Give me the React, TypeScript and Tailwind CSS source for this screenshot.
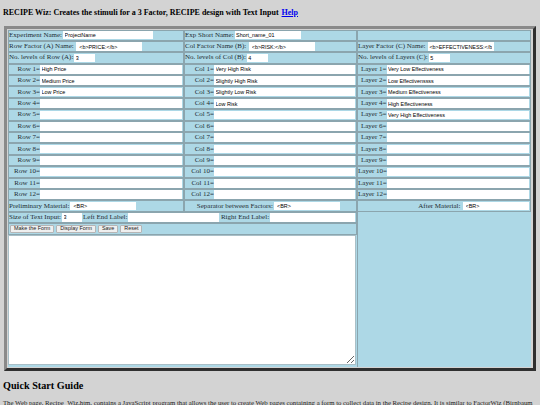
const LEVELS = [1, 2, 3, 4, 5, 6, 7, 8, 9, 10, 11, 12]
const ROWS = ['High Price', 'Medium Price', 'Low Price']
const COLS = ['Very High Risk', 'Slightly High Risk', 'Slightly Low Risk', 'Low Risk']
const LAYERS = [
  'Very Low Effectiveness',
  'Low Effectivenssss',
  'Medium Effectiveness',
  'High Effectiveness',
  'Very High Effectiveness',
]

const cell = 'flex items-center h-[11.4px] bg-[#add8e6] border border-[#8ba5ae] overflow-hidden whitespace-nowrap'
const field = 'h-[8.6px] bg-white px-[1.5px] text-[5.4px] text-black outline-none border-0 font-["Liberation_Sans",Arial,sans-serif]'

function LevelCell({ label, n, value }: { label: string; n: number; value?: string }) {
  const width = label === 'Row' ? 'w-[31px]' : label === 'Col' ? 'w-[29px]' : 'w-[28.5px]'
  return (
    <div className={cell}>
      <span className={`text-right shrink-0 ${width}`}>
        {label} {n}=
      </span>
      <input readOnly value={value ?? ''} className={`${field} flex-1 min-w-0 mr-[1px]`} />
    </div>
  )
}

function Btn({ children }: { children: string }) {
  return (
    <button className='h-[8.4px] px-[3px] bg-[#efefef] border border-[#b5b5b5] rounded-[1px] text-[5.4px] leading-none text-[#222] font-["Liberation_Sans",Arial,sans-serif]'>
      {children}
    </button>
  )
}

export default function App() {
  return (
    <div className='h-[405px] w-[540px] overflow-hidden bg-[#d3d3d3] text-black font-["Liberation_Serif","Times_New_Roman",serif] text-[7px] leading-none'>
      <div className="pl-[3px] pt-[9px] h-[25.5px] text-[8px] font-bold">
        RECIPE Wiz: Creates the stimuli for a 3 Factor, RECIPE design with Text Input{' '}
        <a className="ml-[1px] text-[#0000ee] underline">Help</a>
      </div>

      <div className="ml-[4px] w-[531.5px] border-[3px] border-t-[#8a8a8a] border-l-[#8a8a8a] border-r-[#2f2f2f] border-b-[#2f2f2f] bg-[#d3d3d3] p-[1px]">
        <div className="grid grid-cols-[176px_173px_173.5px] text-[#1f2d33]">
          <div className={cell}>
            <span>Experiment Name:</span>
            <input readOnly value="ProjectName" className={`${field} w-[90px] ml-[1px]`} />
          </div>
          <div className={cell}>
            <span>Exp Short Name:</span>
            <input readOnly value="Short_name_01" className={`${field} w-[66px] ml-[1px]`} />
          </div>
          <div className={cell} />

          <div className={cell}>
            <span className="mr-[2.5px]">Row Factor (A) Name:</span>
            <input readOnly value="<b>PRICE:</b>" className={`${field} w-[66px] pl-[3px]`} />
          </div>
          <div className={cell}>
            <span className="mr-[2.5px]">Col Factor Name (B):</span>
            <input readOnly value="<b>RISK:</b>" className={`${field} w-[66px] pl-[3px]`} />
          </div>
          <div className={cell}>
            <span className="mr-[2.5px]">Layer Factor (C) Name:</span>
            <input readOnly value="<b>EFFECTIVENESS:</b>" className={`${field} w-[66px] pl-[1.5px]`} />
          </div>

          <div className={cell}>
            <span className="mr-[1px]">No. levels of Row (A):</span>
            <input readOnly value="3" className={`${field} w-[21px]`} />
          </div>
          <div className={cell}>
            <span className="mr-[1px]">No. levels of Col (B):</span>
            <input readOnly value="4" className={`${field} w-[21px]`} />
          </div>
          <div className={cell}>
            <span className="mr-[1px]">No. levels of Layers (C):</span>
            <input readOnly value="5" className={`${field} w-[21px]`} />
          </div>

          {LEVELS.map((n) => [
            <LevelCell key={`r${n}`} label="Row" n={n} value={ROWS[n - 1]} />,
            <LevelCell key={`c${n}`} label="Col" n={n} value={COLS[n - 1]} />,
            <LevelCell key={`l${n}`} label="Layer" n={n} value={LAYERS[n - 1]} />,
          ])}

          <div className={cell}>
            <span className="mr-[1px]">Preliminary Material:</span>
            <input readOnly value="<BR>" className={`${field} w-[66px] pl-[3px]`} />
          </div>
          <div className={`${cell} justify-end`}>
            <span className="mr-[1px]">Separator between Factors:</span>
            <input readOnly value="<BR>" className={`${field} w-[66px] mr-[16px] pl-[3px]`} />
          </div>
          <div className={`${cell} justify-end`}>
            <span className="mr-[2px]">After Material:</span>
            <input readOnly value="<BR>" className={`${field} w-[66px] mr-[1px] pl-[3px]`} />
          </div>

          <div className={`${cell} col-span-2`}>
            <span className="mr-[1px]">Size of Text Input:</span>
            <input readOnly value="3" className={`${field} w-[20px]`} />
            <span className="ml-[1px] mr-[0.5px]">Left End Label:</span>
            <input readOnly value="" className={`${field} w-[91px]`} />
            <span className="ml-[2px] mr-[1px]">Right End Label:</span>
            <input readOnly value="" className={`${field} flex-1 min-w-0 mr-[1px]`} />
          </div>
          <div className="row-span-3 bg-[#add8e6] border-l border-[#8ba5ae]" />

          <div className="col-span-2 flex items-center gap-[2px] h-[12px] pl-[1px] bg-[#add8e6] border border-[#8ba5ae]">
            <Btn>Make the Form</Btn>
            <Btn>Display Form</Btn>
            <Btn>Save</Btn>
            <Btn>Reset</Btn>
          </div>

          <div className="col-span-2 h-[131.5px] bg-[#add8e6] pb-[2px] pr-[1px]">
            <textarea readOnly className="block w-full h-full bg-white border border-[#a9bfc7] outline-none resize-y" />
          </div>
        </div>
      </div>

      <h2 className="pl-[3px] pt-[8.5px] text-[10.2px] leading-[13px] font-bold">Quick Start Guide</h2>
      <p className="pl-[3px] pt-[6.5px] pr-[3px] text-[6.75px] leading-[8px] whitespace-nowrap text-[#222]">
        The Web page, Recipe_Wiz.htm, contains a JavaScript program that allows the user to create Web pages containing a form to collect data in the Recipe design. It is similar to FactorWiz (Birnbaum
      </p>
    </div>
  )
}
